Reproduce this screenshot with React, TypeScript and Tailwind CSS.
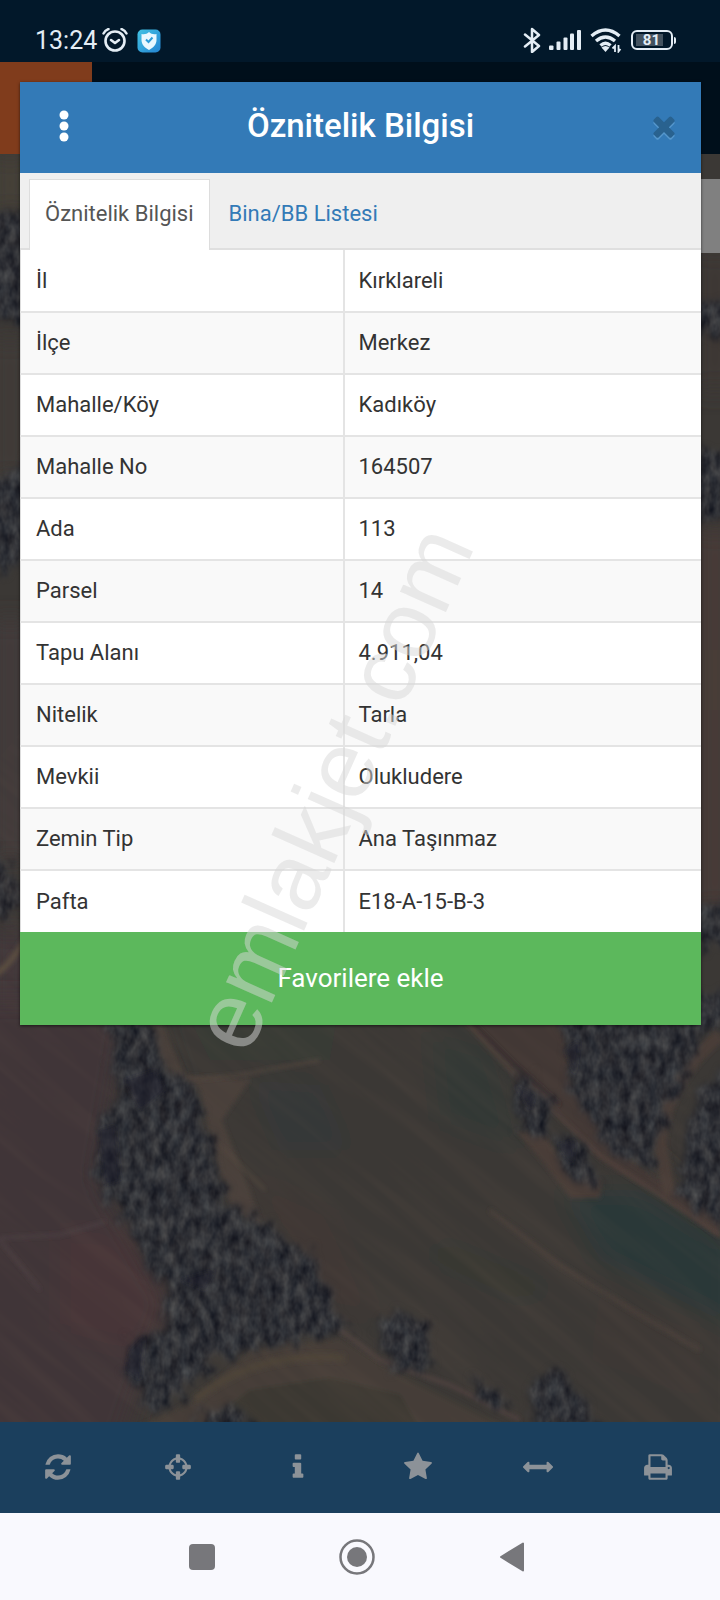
import React from "react";
import { clsx } from "clsx";

const rows = [
  { label: "İl", value: "Kırklareli" },
  { label: "İlçe", value: "Merkez" },
  { label: "Mahalle/Köy", value: "Kadıköy" },
  { label: "Mahalle No", value: "164507" },
  { label: "Ada", value: "113" },
  { label: "Parsel", value: "14" },
  { label: "Tapu Alanı", value: "4.911,04" },
  { label: "Nitelik", value: "Tarla" },
  { label: "Mevkii", value: "Olukludere" },
  { label: "Zemin Tip", value: "Ana Taşınmaz" },
  { label: "Pafta", value: "E18-A-15-B-3" },
];

const tools = [
  {
    name: "Yenile",
    path: "M1639 1056q0 5-1 7-64 268-268 434.5t-478 166.5q-146 0-282.5-55t-243.5-157l-129 129q-19 19-45 19t-45-19-19-45v-448q0-26 19-45t45-19h448q26 0 45 19t19 45-19 45l-137 137q71 66 161 102t187 36q134 0 250-65t186-179q11-17 53-117 8-23 30-23h192q13 0 22.5 9.5t9.5 22.5zm25-800v448q0 26-19 45t-45 19h-448q-26 0-45-19t-19-45 19-45l138-138q-148-137-349-137-134 0-250 65t-186 179q-11 17-53 117-8 23-30 23h-199q-13 0-22.5-9.5t-9.5-22.5v-7q65-268 270-434.5t480-166.5q146 0 284 55.5t245 156.5l130-129q19-19 45-19t45 19 19 45z",
  },
  {
    name: "Konum",
    path: "M1325 1024h-109q-26 0-45-19t-19-45v-128q0-26 19-45t45-19h109q-32-108-112.5-188.5t-188.5-112.5v109q0 26-19 45t-45 19h-128q-26 0-45-19t-19-45v-109q-108 32-188.5 112.5t-112.5 188.5h109q26 0 45 19t19 45v128q0 26-19 45t-45 19h-109q32 108 112.5 188.5t188.5 112.5v-109q0-26 19-45t45-19h128q26 0 45 19t19 45v109q108-32 188.5-112.5t112.5-188.5zm339-192v128q0 26-19 45t-45 19h-143q-37 161-154.5 278.5t-278.5 154.5v143q0 26-19 45t-45 19h-128q-26 0-45-19t-19-45v-143q-161-37-278.5-154.5t-154.5-278.5h-143q-26 0-45-19t-19-45v-128q0-26 19-45t45-19h143q37-161 154.5-278.5t278.5-154.5v-143q0-26 19-45t45-19h128q26 0 45 19t19 45v143q161 37 278.5 154.5t154.5 278.5h143q26 0 45 19t19 45z",
  },
  {
    name: "Bilgi",
    path: "M1216 1344v128q0 26-19 45t-45 19h-512q-26 0-45-19t-19-45v-128q0-26 19-45t45-19h64v-384h-64q-26 0-45-19t-19-45v-128q0-26 19-45t45-19h384q26 0 45 19t19 45v576h64q26 0 45 19t19 45zm-128-1152v192q0 26-19 45t-45 19h-256q-26 0-45-19t-19-45v-192q0-26 19-45t45-19h256q26 0 45 19t19 45z",
  },
  {
    name: "Favoriler",
    path: "M1728 647q0 22-26 48l-363 354 86 500q1 7 1 20 0 21-10.5 35.5t-30.5 14.5q-19 0-40-12l-449-236-449 236q-22 12-40 12-21 0-31.5-14.5t-10.5-35.5q0-6 2-20l86-500-364-354q-25-27-25-48 0-37 56-46l502-73 225-455q19-41 49-41t49 41l225 455 502 73q56 9 56 46z",
  },
  {
    name: "Ölçüm",
    path: "M1792 896q0 26-19 45l-256 256q-19 19-45 19t-45-19-19-45v-128h-1024v128q0 26-19 45t-45 19-45-19l-256-256q-19-19-19-45t19-45l256-256q19-19 45-19t45 19 19 45v128h1024v-128q0-26 19-45t45-19 45 19l256 256q19 19 19 45z",
  },
  {
    name: "Yazdır",
    path: "M448 1536h896v-256h-896v256zm0-640h896v-384h-160q-40 0-68-28t-28-68v-160h-640v640zm1152 64q0-26-19-45t-45-19-45 19-19 45 19 45 45 19 45-19 19-45zm128 0v416q0 13-9.5 22.5t-22.5 9.5h-224v160q0 40-28 68t-68 28h-960q-40 0-68-28t-28-68v-160h-224q-13 0-22.5-9.5t-9.5-22.5v-416q0-79 56.5-135.5t135.5-56.5h64v-544q0-40 28-68t68-28h672q40 0 88 20t76 48l152 152q28 28 48 76t20 88v256h64q79 0 135.5 56.5t56.5 135.5z",
  },
];

const timesPath =
  "M1490 1322q0 40-28 68l-136 136q-28 28-68 28t-68-28l-294-294-294 294q-28 28-68 28t-68-28l-136-136q-28-28-28-68t28-68l294-294-294-294q-28-28-28-68t28-68l136-136q28-28 68-28t68 28l294 294 294-294q28-28 68-28t68 28l136 136q28 28 28 68t-28 68l-294 294 294 294q28 28 28 68z";

function StatusBar() {
  return (
    <div className="flex h-[62px] items-center justify-between bg-[#02182a] pt-[18px] pr-11 pl-[35px] text-[#e4edf5]">
      <div className="flex items-center pt-[2px]">
        <span className="text-[25px] leading-8">13:24</span>
        <svg className="ml-1 h-[26px] w-[28px]" viewBox="0 0 28 26" fill="none" stroke="currentColor" strokeLinecap="round">
          <circle cx="14" cy="13" r="9.5" strokeWidth="2.6" />
          <path d="M2.500 5.500Q4 2 7.500 1M25.500 5.500Q24 2 20.500 1" strokeWidth="2.4" />
          <path d="m10 12 4 3 4-3" strokeWidth="2.6" strokeLinejoin="round" />
        </svg>
        <svg className="ml-2 h-6 w-6" viewBox="0 0 24 24">
          <defs>
            <linearGradient id="shield" x1="0" y1="0" x2="1" y2="1">
              <stop offset="0" stopColor="#42c3e4" />
              <stop offset="1" stopColor="#2484d2" />
            </linearGradient>
          </defs>
          <rect width="23" height="23" x=".5" y=".5" rx="5" fill="url(#shield)" />
          <path d="M12 3c2 2 4.500 2.500 7.500 2v6c0 4.500-3 7.500-7.500 10-4.500-2.500-7.500-5.500-7.500-10V5c3 .5 5.500 0 7.500-2Z" fill="#e9f8ff" />
          <path d="m9 10.500 2.500 2.500 4-4.500" fill="none" stroke="#2c9bd8" strokeWidth="2" />
        </svg>
      </div>
      <div className="flex items-center">
        <svg className="h-[26px] w-[18px]" viewBox="0 0 18 26" fill="none" stroke="currentColor" strokeWidth="2.5" strokeLinejoin="round" strokeLinecap="round">
          <path d="m2 7.500 14 11.500-7 6V2l7 6L2 19.500" />
        </svg>
        <svg className="ml-2 h-[22px] w-[33px]" viewBox="0 0 33 22" fill="currentColor">
          <rect x="0" y="16.500" width="4.500" height="4.500" rx="1" />
          <rect x="7.500" y="12.500" width="4" height="8.500" rx="1" />
          <rect x="14.500" y="8.500" width="4" height="12.500" rx="1" />
          <rect x="21" y="4.500" width="4" height="16.500" rx="1" />
          <rect x="28" y="1" width="4" height="20" rx="1" />
        </svg>
        <svg className="ml-2 h-[26px] w-8" viewBox="0 0 32 26" fill="none" stroke="currentColor" strokeWidth="3.4">
          <path d="M1.500 9q14-12 28 0" />
          <path d="M6 14q9.500-8 19 0" />
          <path d="M10.500 18.500q5-4.500 10 0" />
          <path d="m11.500 20.500 4 4.500 4-4.500q-4-3-8 0Z" fill="currentColor" stroke="none" />
          <path d="M25 25v-6l-2.500 2.500M28.500 18v6.500l2-2.500" strokeWidth="1.800" />
        </svg>
        <div className="ml-[9px] flex h-5 w-[42px] items-center rounded-md border-2 border-current px-[3px]">
          <span className="flex h-3 w-[27px] items-center justify-end bg-[#43525f] pr-[3px] text-[15px] leading-none font-bold">
            81
          </span>
        </div>
        <span className="ml-px h-[7px] w-[2px] rounded-r bg-current" />
      </div>
    </div>
  );
}

function AerialMap() {
  return (
    <svg className="absolute inset-0 h-full w-full" viewBox="0 154 720 1268" preserveAspectRatio="xMidYMax slice" aria-hidden="true">
      <defs>
        <filter id="soft" x="-20%" y="-20%" width="140%" height="140%">
          <feGaussianBlur stdDeviation="12" />
        </filter>
        <filter id="edge" x="-10%" y="-10%" width="120%" height="120%">
          <feGaussianBlur stdDeviation="2" />
        </filter>
        {/* leafy clumps with ragged outlines */}
        <filter id="trees" x="-10%" y="-10%" width="120%" height="120%" colorInterpolationFilters="sRGB">
          <feTurbulence type="fractalNoise" baseFrequency="0.1 0.06" numOctaves="3" seed="8" result="n" />
          <feColorMatrix
            in="n"
            values="0.27 0.06 0 0 0.02  0.27 0.04 0 0 0.035  0.24 0.02 0 0 0.08  0 0 0 0 1"
            result="leaf"
          />
          <feDisplacementMap in="SourceGraphic" in2="n" scale="34" xChannelSelector="R" yChannelSelector="G" result="d" />
          <feGaussianBlur in="d" stdDeviation="3" result="s" />
          <feComposite in="leaf" in2="s" operator="in" />
        </filter>
        {/* faint plough lines */}
        <filter id="furrow" x="0" y="0" width="100%" height="100%" colorInterpolationFilters="sRGB">
          <feTurbulence type="fractalNoise" baseFrequency="0.005 0.06" numOctaves="3" seed="4" />
          <feColorMatrix values="0 0 0 0 0.45  0 0 0 0 0.37  0 0 0 0 0.32  1.6 0 0 0 -0.6" />
        </filter>
      </defs>
      <rect y="154" width="720" height="1268" fill="#3b3835" />

      {/* slivers beside the dialog */}
      <g filter="url(#soft)">
        <rect x="-10" y="154" width="40" height="60" fill="#454039" />
        <rect x="-10" y="340" width="40" height="140" fill="#413b38" />
        <rect x="-10" y="620" width="40" height="240" fill="#433a3b" />
        <rect x="-10" y="930" width="40" height="500" fill="#43373a" />
        <rect x="695" y="250" width="40" height="140" fill="#3d3836" />
        <rect x="695" y="530" width="40" height="380" fill="#463a38" />
        <rect x="695" y="650" width="40" height="60" fill="#4a3d38" />
      </g>
      <g filter="url(#trees)">
        <path d="M-10 210h45v110h-45zM-10 480q25 0 45-30v110l-45 10zM-10 850q30 20 40 60l-40 10zM690 300h40v35h-40zM690 455q20-10 40 0v65h-40zM690 905h40v40h-40zM690 990h40v40h-40z" />
      </g>
      <path d="M-5 975q15-10 30-35" fill="none" stroke="#5a4d40" strokeWidth="6" filter="url(#edge)" />

      {/* fields */}
      <g filter="url(#soft)">
        <path d="M-30 1000H130L100 1180 170 1300 120 1450H-30Z" fill="#403539" />
        <path d="M60 1230 130 1235 170 1310 130 1350 60 1330Z" fill="#463637" />
        <path d="M150 1000H480L740 1240V1450H340L230 1230Z" fill="#3b3835" />
        <path d="M180 1000H340L330 1060H210Z" fill="#393a35" />
        <path d="M250 1080 320 1085 350 1150 280 1150Z" fill="#353837" />
        <path d="M430 1030 490 1050 520 1150 440 1120Z" fill="#333736" />
        <path d="M560 1190 640 1190 740 1250V1330L600 1260Z" fill="#2c3938" />
        <path d="M440 1240 560 1290 520 1300 430 1260Z" fill="#363733" />
        <path d="M240 1170 330 1210 380 1320 330 1310Z" fill="#403936" />
        <path d="M600 1290 700 1330 700 1400 590 1360Z" fill="#3c3734" />
      </g>
      <g filter="url(#edge)">
        <path d="M145 1020 162 1065 200 1090 212 1145 232 1210 262 1228 250 1190 222 1120 250 1080 185 1075 160 1020Z" fill="#483f3a" />
        <path d="M465 1020H562L570 1080 612 1145 650 1175 720 1215V1238L660 1195 600 1160 550 1105Z" fill="#433736" />
        <path d="M515 1130 545 1135 570 1170 602 1180 600 1198 570 1198 545 1165Z" fill="#493d39" />
        <path d="M130 1430 195 1400 250 1350 340 1338 400 1375 510 1430Z" fill="#443d37" />
        <path d="M200 1430 250 1390 330 1378 400 1395 420 1430Z" fill="#3a3932" />
      </g>
      <g fill="none" filter="url(#edge)">
        <path d="M720 1035q-30 25-45 55t-15 55l10 50" stroke="#493d39" strokeWidth="13" />
        <path d="M465 1020 510 1070 600 1155 640 1182 720 1235" stroke="#54443e" strokeWidth="3" />
        <path d="M470 1020 512 1062 560 1105" stroke="#2e2629" strokeWidth="2" />
        <path d="M200 1130 230 1155 265 1190M185 1080 240 1075 320 1060" stroke="#544840" strokeWidth="2" />
        <path d="M490 1210 560 1265 640 1315 700 1350" stroke="#4a403b" strokeWidth="4" />
        <path d="M340 1330 380 1360 450 1385 520 1420" stroke="#50423f" strokeWidth="4" />
        <path d="M0 1238 60 1235 105 1222M0 1240 40 1290" stroke="#4e4347" strokeWidth="2" />
        <path d="M195 1400q60-50 150-42" stroke="#4b4339" strokeWidth="8" />
      </g>
      <g opacity="0.16">
        <rect x="-200" y="900" width="1300" height="800" filter="url(#furrow)" transform="rotate(40 360 1200)" />
      </g>

      {/* woods and bushes */}
      <g filter="url(#trees)">
        <path d="M108 1015 145 1015 168 1068 195 1085 205 1125 216 1165 230 1210 248 1212 285 1238 310 1252 330 1295 348 1330 300 1343 250 1350 220 1358 195 1378 180 1400 160 1408 140 1400 122 1370 130 1340 158 1332 168 1310 165 1290 148 1270 133 1235 112 1205 97 1180 97 1120 118 1100Z" />
        <path d="M563 1015H705L692 1060 668 1108 658 1140 652 1170 608 1150 585 1115 570 1085Z" />
        <path d="M700 1090 730 1065V1228L703 1212 680 1195 683 1140Z" />
        <path d="M512 1073 532 1078 552 1100 545 1140 520 1132ZM555 1140 575 1136 592 1160 602 1182 580 1185 560 1170Z" />
        <path d="M382 1325 405 1310 428 1335 432 1370 400 1372 382 1355ZM535 1378 560 1372 590 1405 595 1430H530ZM200 1412 245 1408 250 1430H200ZM470 1378 500 1392 510 1410 475 1400Z" />
      </g>
      {/* shade under the thickest crowns */}
      <g fill="#1b1c2a" opacity="0.5" filter="url(#edge)">
        <path d="M125 1080 155 1070 165 1090 140 1110ZM98 1130 115 1125 120 1180 105 1185ZM180 1280 215 1270 205 1290ZM130 1350 145 1335 140 1380 125 1370ZM565 1050 580 1040 575 1075ZM558 1145 575 1140 572 1165ZM515 1085 535 1095 530 1110Z" />
      </g>
    </svg>
  );
}

function AttributeDialog() {
  return (
    <section
      role="dialog"
      aria-label="Öznitelik Bilgisi"
      className="absolute top-[82px] right-[19px] left-5 bg-white shadow-[0_1px_3px_rgba(0,0,0,0.6)]"
    >
      <header className="flex h-[91px] items-center justify-between bg-[#337ab7] px-5 pb-[3px]">
        <button type="button" aria-label="Menü" className="flex w-12 justify-center text-white">
          <svg className="h-8 w-3" viewBox="0 0 12 32" fill="currentColor">
            <circle cx="6" cy="5" r="4.500" />
            <circle cx="6" cy="16" r="4.500" />
            <circle cx="6" cy="27" r="4.500" />
          </svg>
        </button>
        <h1 className="text-[33px] leading-10 font-medium text-white">Öznitelik Bilgisi</h1>
        <button type="button" aria-label="Kapat" className="flex w-12 justify-end pr-px text-[#29628f]">
          <svg className="size-8 drop-shadow-[0_2px_0_rgba(120,180,225,0.5)]" viewBox="0 0 1792 1792" fill="currentColor">
            <path d={timesPath} />
          </svg>
        </button>
      </header>

      <div role="tablist" className="flex h-[77px] items-end border-b-2 border-[#dfdfdf] bg-[#efefef] pl-[9px]">
        <button
          type="button"
          role="tab"
          aria-selected="true"
          className="-mb-[2px] h-[71px] border border-b-0 border-[#dddddd] bg-white px-[15px] pb-1 text-[22px] text-[#555555]"
        >
          Öznitelik Bilgisi
        </button>
        <button type="button" role="tab" aria-selected="false" className="h-[69px] px-[19px] text-[22px] text-[#337ab7]">
          Bina/BB Listesi
        </button>
      </div>

      <table className="w-full table-fixed text-left text-[22px] leading-8 text-[#333333]">
        <tbody>
          {rows.map((row, i) => (
            <tr
              key={row.label}
              className={clsx("h-[62px] border-l border-[#dddddd]", i > 0 && "border-t-2 border-t-[#e4e4e4]", i % 2 === 1 && "bg-[#f9f9f9]")}
            >
              <th scope="row" className="w-[323px] border-r-2 border-[#e4e4e4] pl-[15px] font-normal">
                {row.label}
              </th>
              <td className="pl-[14px]">{row.value}</td>
            </tr>
          ))}
        </tbody>
      </table>

      <button type="button" className="h-[93px] w-full bg-[#5cb85c] text-[26px] text-white">
        Favorilere ekle
      </button>
    </section>
  );
}

export default function App() {
  return (
    <div className="relative flex min-h-screen flex-col overflow-hidden bg-[#000f1b] font-[Roboto,sans-serif]">
      <StatusBar />
      <div className="h-[92px] bg-[#000f1b]">
        <div className="h-full w-[92px] bg-[#803c1c]" />
      </div>
      <main className="relative flex-1 overflow-hidden">
        <AerialMap />
        <div className="absolute top-[25px] right-0 h-[74px] w-10 bg-[#808080]" />
      </main>
      <nav className="grid h-[91px] grid-cols-6 bg-[#1b3f5d] pb-[2px] text-[#8c9298]">
        {tools.map((tool) => (
          <button key={tool.name} type="button" aria-label={tool.name} className="flex items-center justify-center pr-1">
            <svg className="size-[30px]" viewBox="0 0 1792 1792" fill="currentColor">
              <path d={tool.path} />
            </svg>
          </button>
        ))}
      </nav>
      <footer className="flex h-[87px] items-center justify-center gap-[119px] bg-[#f9f9fe] pr-[6px] text-[#77777b]">
        <button type="button" aria-label="Son uygulamalar" className="flex w-9 justify-center">
          <span className="size-[26px] rounded-[4px] bg-current" />
        </button>
        <button type="button" aria-label="Ana ekran" className="flex w-9 justify-center">
          <svg className="size-9" viewBox="0 0 36 36">
            <circle cx="18" cy="18" r="16.500" fill="none" stroke="currentColor" strokeWidth="2.500" />
            <circle cx="18" cy="18" r="10" fill="currentColor" />
          </svg>
        </button>
        <button type="button" aria-label="Geri" className="flex w-9 justify-center">
          <svg className="h-[30px] w-[26px]" viewBox="0 0 26 30" fill="currentColor" stroke="currentColor" strokeWidth="2" strokeLinejoin="round">
            <path d="M2 15 24 1.500v27Z" />
          </svg>
        </button>
      </footer>

      <AttributeDialog />
      <span className="pointer-events-none absolute top-[788px] left-[332px] -translate-x-1/2 -translate-y-1/2 -rotate-66 font-['Liberation_Sans',sans-serif] text-[95px] leading-none whitespace-nowrap text-[#d7d7d7]/50">
        emlakjet.com
      </span>
    </div>
  );
}
